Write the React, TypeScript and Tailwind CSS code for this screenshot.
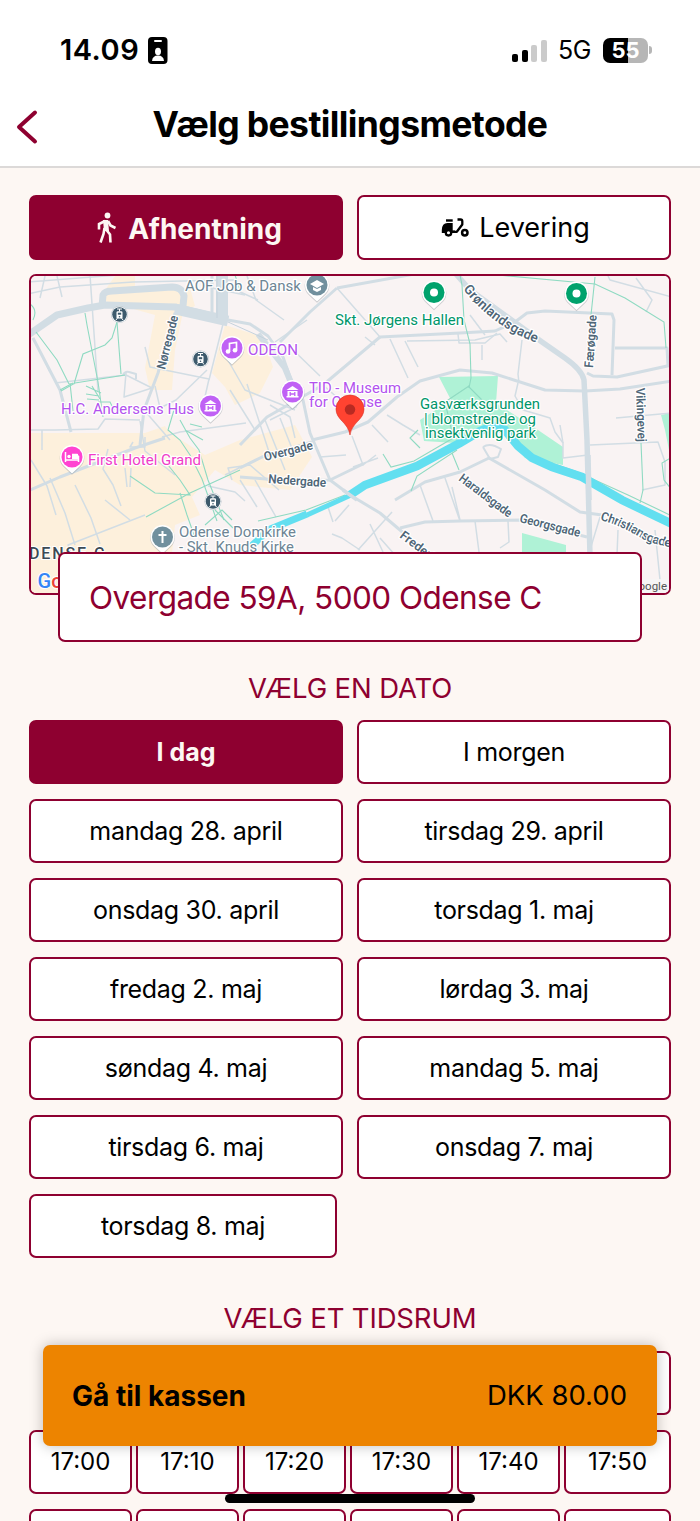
import React from "react";

const roadsWide: string[] = [
  "M28 335 L57 315 L88 308 L105 305 L175 307 L228 320",
  "M102 307 L103 295 Q105 291 112 291 L172 287 Q182 287 184 296 L183 306",
  "M222 274 L222 320",
];
const roadsMid: string[] = [
  "M228 320 L250 324 L268 336 L283 357 L291 380 L303 400 L310 433 L330 480 L350 495 L380 513 L400 530 L430 556",
  "M175 313 L158 373 L144 410 L140 445",
  "M33 338 L60 390 L71 432",
  "M337 288 L310 312 L280 342",
  "M337 288 L420 273",
  "M212 276 L212 312",
  "M380 337 L460 333 L495 331 L515 322 L527 313 L545 311 L612 314 L614 320 L612 375",
  "M380 337 L323 385 L267 417 L240 445",
  "M312 440 L345 432 L368 422 L397 397 L420 381 L460 370 L492 373 L545 390 L585 391 L620 389 L672 381",
  "M587 373 L593 376 L617 377 L672 365",
  "M615 348 L667 348 L668 366",
  "M28 491 L60 477 L135 448 L165 438",
  "M240 468 L262 457 L312 442 M240 477 L290 481 L330 480 L363 464",
  "M395 500 L425 482 L460 472 L489 458 L545 490 L580 512 L602 515",
  "M400 528 L425 522 L460 521 L520 520 L587 537",
];
const roadsThin: string[] = [
  "M302 395 L296 407 L270 420 M323 385 L340 400",
  "M380 337 L337 288 M365 337 L375 345 M275 342 L307 320 M290 347 L320 376",
  "M390 339 L408 378 M405 341 L418 367 M407 341 L475 340 L500 334 L507 342",
  "M458 334 L459 343 L485 343 L497 333 M470 315 L485 335",
  "M518 383 L515 396 L523 410 L540 415 L550 418 L555 432 L563 443 L563 458 L588 455",
  "M608 276 L610 280 L672 297 M636 278 L652 300 L646 312 M616 418 L672 413",
  "M590 445 L658 442 L665 462 L665 485 L642 490",
  "M352 436 L363 465 L376 455 M353 467 L378 458 M320 457 L346 455",
  "M372 425 L388 442 M387 415 L403 425 L420 435 M420 485 L433 521 M445 478 L460 521 M452 487 L460 520",
  "M327 504 L333 522 M349 505 L335 521 M332 534 L342 538 L360 550 M358 550 L392 512 M370 524 L383 552 M380 538 L395 555",
  "M45 276 L40 298 M28 294 L60 287 L133 282 L235 280 M28 282 L118 275 M57 276 L62 297",
  "M33 338 L50 372 M28 430 L55 430 L98 429 L105 419 L140 420",
  "M55 383 L126 375 L152 388 L124 397 L126 373 M145 347 L150 367 L209 379 L202 410",
  "M144 410 L170 440 M155 386 L160 408 L176 400 L207 370",
  "M90 275 L98 391 M209 380 L224 320 M225 355 L245 390 L295 410",
  "M42 430 L42 450 M133 442 L130 447 L145 447 L145 437",
  "M125 468 L127 487 M131 468 L130 487 M105 500 L130 520 M75 485 L91 518 L100 544",
  "M108 449 L103 469 L113 485 L121 506 M145 515 L68 545 L80 578",
  "M50 478 L65 513 L75 545 M31 460 L47 486 L56 515",
  "M140 421 L145 451 L175 475 M162 437 L180 432 L246 423",
  "M225 475 L251 462 M232 480 L228 468 L250 465 L279 490",
  "M208 486 L235 492 L245 501 M240 480 L257 507 M255 480 L276 517",
  "M247 276 L256 300 L284 320 M212 288 L245 295 M236 290 L258 300",
  "M519 383 L518 374 L522 340 M482 345 L482 360 M600 517 L590 550 M655 530 L660 580 M618 530 L617 555",
  "M475 521 L479 552 M508 521 L509 542 L500 548 M560 425 L563 443",
  "M270 405 L290 417 L295 438 M265 420 L285 470 M280 418 L295 456 M247 384 L270 455 M230 390 L255 430",
];
const paths: string[] = [
  "M85 313 L87 325 L98 382 L103 417 M117 322 L121 374",
  "M117 322 L112 338 L105 345 L83 354 L74 384 M61 391 L75 383 L125 375 M70 383 L73 411",
  "M36 332 L57 360 L69 384 M30 304 Q38 310 33 320",
  "M86 386 L101 393 M86 394 L99 396 M87 399 L99 400 M92 386 L100 399",
  "M98 402 L110 402 L114 410 M174 410 L168 430 L180 440 L190 455 L202 479 L217 521",
  "M180 420 L190 438 L199 450 L208 480 L224 520 M202 427 L190 424 M203 440 L185 430",
  "M146 517 L190 493 L240 470 M130 476 L155 493 L190 495 L180 480 L168 465 M180 493 L187 515 L194 535",
  "M205 525 L222 510 L232 520 M215 510 L233 528",
  "M460 275 L462 285 L464 320 L470 344 L471 378 L469 388 M498 275 L595 284 L625 298 L664 322 L666 348",
  "M595 277 L591 315 M641 443 L643 490 L640 503 M672 457 L662 463 L664 480 L672 490",
  "M258 521 L306 510 L345 495 M383 454 L391 467 L414 461 L455 437 M411 491 L417 476 L457 450",
  "M517 446 L540 459 L575 471 L628 495 L672 516",
  "M418 430 L410 438 L420 448 M452 453 L459 470 M235 275 L240 290",
  "M60 390 L73 383 M468 386 L485 403 M469 386 L445 402 L453 436",
];

function Pin({ x, y, color, children }: { x: number; y: number; color: string; children?: React.ReactNode }) {
  return (
    <g transform={`translate(${x} ${y})`}>
      <path d="M0 17 L-8 9.500 A12.300 12.300 0 1 1 8 9.500 Z" fill="#77838c" opacity=".35" transform="translate(0 .8)" />
      <path d="M0 16.500 L-8 9 A12 12 0 1 1 8 9 Z" fill="#fff" />
      <circle r="10.500" fill={color} />
      {children}
    </g>
  );
}

function Station({ x, y }: { x: number; y: number }) {
  return (
    <g transform={`translate(${x} ${y})`}>
      <circle r="8.500" fill="#b9c4cb" />
      <circle r="8" fill="#fff" />
      <circle r="7.300" fill="#3d5a6c" />
      <path d="M-2.500 -5.500 H2.500 M0 -5.500 V-3 M-3.500 5.500 L-2 3.500 M3.500 5.500 L2 3.500" stroke="#fff" strokeWidth="1" fill="none" />
      <rect x="-3" y="-3.300" width="6" height="7.300" rx="1.300" fill="#fff" />
      <rect x="-1.700" y="-1.800" width="3.400" height="2" fill="#3d5a6c" />
      <circle cy="2.200" r=".8" fill="#3d5a6c" />
    </g>
  );
}

function MuseumGlyph() {
  return (
    <g>
      <path d="M-6 -2 L0 -6 L6 -2 Z M-5 -1 H5 V5 H-5 Z M-6 4 H6 V5.500 H-6 Z" fill="#fff" />
      <path d="M-2.300 4 V0 M2.300 4 V0 M-2.300 2 H2.300" stroke="#c061f5" strokeWidth="1.300" fill="none" />
    </g>
  );
}

function Label({ x, y, w, color, children, t, size = 14.5, bold = false }: {
  x: number; y: number; w?: number; color: string; children: React.ReactNode; t?: string; size?: number; bold?: boolean;
}) {
  return (
    <text x={x} y={y} textLength={w} lengthAdjust="spacingAndGlyphs" transform={t} fontSize={size} fill={color}
      fontWeight={bold ? 600 : 450} stroke="#fff" strokeWidth="2.500" strokeLinejoin="round" paintOrder="stroke">
      {children}
    </text>
  );
}

function CityMap() {
  const street = "#4f6677";
  const green = "#00966a";
  const purple = "#b352ee";
  return (
    <svg viewBox="31 276 638 317" className="block h-full w-full" fontFamily="Roboto, sans-serif" preserveAspectRatio="none">
      <rect x="30" y="275" width="642" height="320" fill="#f9f3f3" />
      <g fill="#fdf0dc">
        <path d="M30 433 H170 L205 455 L240 440 L295 425 L312 457 L290 490 L240 485 L215 470 L192 497 L200 515 L175 525 L172 553 V595 H30 Z" />
        <path d="M115 276 H135 V288 H190 L195 306 L183 312 L175 350 L172 390 L150 390 L145 368 L155 315 L105 301 V290 Z" />
        <path d="M225 325 L263 337 L273 367 L260 393 L235 405 L225 387 L212 373 Z" />
        <path d="M145 433 L165 426 L175 440 Z" />
      </g>
      <g fill="#aff2d6">
        <path d="M439 377 L498 376 L496 403 L538 430 L563 447 V465 L525 458 L512 440 L500 430 L480 433 L455 443 L424 441 L420 420 L451 400 Z" />
        <path d="M522 533 L566 545 V556 H522 Z" />
        <path d="M661 415 L670 413 V455 L665 430 Z" />
      </g>
      <g fill="none" stroke="#d2dde4" strokeLinejoin="round">
        {roadsThin.map((d, i) => <path key={i} d={d} strokeWidth="1.500" />)}
        {roadsMid.map((d, i) => <path key={i} d={d} strokeWidth="3" />)}
        {roadsWide.map((d, i) => <path key={i} d={d} strokeWidth="7" />)}
        <path d="M175 309 L228 321" strokeWidth="11" />
        <path d="M222 276 V320" strokeWidth="12" />
        <path d="M217 276 V318" stroke="#c5d2dc" strokeWidth="1" />
        <path d="M456 274 L470 290 L542 342 L565 358 Q582 370 584 380 L587 440 L590 556" strokeWidth="5.500" />
        <path d="M258 334 L285 368 L292 385" strokeWidth="6" />
        <path d="M228 322 L268 340" stroke="#c5d2dc" strokeWidth="1" />
        <path d="M483 447 L490 459 L498 457 L501 449 Q490 442 483 447" strokeWidth="2" />
        <path d="M123 375 Q125 371 129 372 L136 374 L136 379" strokeWidth="2" />
      </g>
      <g fill="none" stroke="#8fdac2" strokeWidth="1.100">
        {paths.map((d, i) => <path key={i} d={d} />)}
      </g>
      <path d="M248 549 L256 542 L268 530 L307 514" fill="none" stroke="#62dff0" strokeWidth="7" />
      <path d="M307 515 L351 495" fill="none" stroke="#62dff0" strokeWidth="5" />
      <path d="M350 495 L365 485 L417 466 L460 443 L480 431 L493 426 L505 430 L518 446 L532 458 L552 467 L582 477 L622 500 L672 524" fill="none" stroke="#62dff0" strokeWidth="8.500" />
      <path d="M343 490 L357 500 M588 465 L589 500" stroke="#d2dde4" strokeWidth="3.500" fill="none" />
      <path d="M588 455 L589 500" stroke="#d2dde4" strokeWidth="5.500" fill="none" />

      <Label x={185} y={291} w={116} color="#6d8594">AOF Job &amp; Dansk</Label>
      <Label x={335} y={325} w={129} color={green}>Skt. Jørgens Hallen</Label>
      <Label x={248} y={355} w={50} color={purple}>ODEON</Label>
      <Label x={61} y={413.5} w={133} color={purple}>H.C. Andersens Hus</Label>
      <Label x={309} y={392.500} w={92} color={purple}>TID - Museum</Label>
      <Label x={309} y={407} w={73} color={purple}>for Odense</Label>
      <Label x={88} y={464.500} w={113} color="#f03cc8">First Hotel Grand</Label>
      <Label x={179} y={537} w={117} color="#6d8594">Odense Domkirke</Label>
      <Label x={179} y={552} w={115} color="#6d8594">- Skt. Knuds Kirke</Label>
      <Label x={420} y={408.500} w={120} color={green}>Gasværksgrunden</Label>
      <Label x={424} y={423.500} w={112} color={green}>| blomstrende og</Label>
      <Label x={425} y={438} w={111} color={green}>insektvenlig park</Label>
      <Label x={0} y={0} w={55} size={12.500} bold color={street} t="translate(165 370) rotate(-76)">Nørregade</Label>
      <Label x={0} y={0} w={50} size={12.500} bold color={street} t="translate(265 461) rotate(-14)">Overgade</Label>
      <Label x={0} y={0} w={58} size={12.500} bold color={street} t="translate(268 483) rotate(4)">Nedergade</Label>
      <Label x={0} y={0} w={53} size={12.500} bold color={street} t="translate(593 368) rotate(-86)">Færøgade</Label>
      <Label x={0} y={0} w={54} size={12.500} bold color={street} t="translate(636 388) rotate(88)">Vikingevej</Label>
      <Label x={0} y={0} w={62} size={12.500} bold color={street} t="translate(519 522) rotate(14)">Georgsgade</Label>
      <Label x={0} y={0} w={63} size={12.500} bold color={street} t="translate(458 480) rotate(37)">Haraldsgade</Label>
      <Label x={0} y={0} size={12.500} bold color={street} t="translate(399 537) rotate(37)">Frederiksgade</Label>
      <path id="gronlandsgade" d="M463 289 Q494 329 545 346" fill="none" />
      <path id="christiansgade" d="M600 520 Q620 525 643 539 Q655 546 690 550" fill="none" />
      <g fontSize="13.500" fontWeight="600" fill={street} stroke="#fff" strokeWidth="2.500" paintOrder="stroke">
        <text><textPath href="#gronlandsgade">Grønlandsgade</textPath></text>
        <text fontSize="12.500" letterSpacing="-0.650"><textPath href="#christiansgade">Christiansgade</textPath></text>
      </g>
      <text x="29" y="559" fontSize="16" fontWeight="500" letterSpacing="1.900" fill="#3c4a55" stroke="#fff" strokeWidth="2" paintOrder="stroke">DENSE C</text>

      <Station x={119.500} y={314.500} />
      <Station x={200.500} y={359} />
      <Station x={213} y={501.500} />
      <Pin x={317} y={285} color="#71909e">
        <path d="M-7 -1 L0 -5 L7 -1 L0 3 Z M-4 2 V5 L0 7 L4 5 V2 L0 4 Z" fill="#fff" />
      </Pin>
      <Pin x={434} y={292.500} color="#00a26c"><circle r="4" fill="#fff" /></Pin>
      <Pin x={576.500} y={293.500} color="#00a26c"><circle r="4" fill="#fff" /></Pin>
      <Pin x={232} y={348} color="#c061f5">
        <path d="M-2.500 3.500 V-4.500 L4.500 -5.500 V2" fill="none" stroke="#fff" strokeWidth="1.700" />
        <circle cx="-4" cy="3.500" r="2.300" fill="#fff" /><circle cx="3" cy="2.300" r="2.300" fill="#fff" />
      </Pin>
      <Pin x={210.500} y={406} color="#c061f5"><MuseumGlyph /></Pin>
      <Pin x={292.500} y={392} color="#c061f5"><MuseumGlyph /></Pin>
      <Pin x={72} y={457} color="#ff43d1">
        <path d="M-6.500 -5 V5 M-6.500 3 H6.500 M6.500 5 V-1 M0 -2.500 H5 L6.500 0" fill="none" stroke="#fff" strokeWidth="1.500" />
        <path d="M0 -3 H6 V2 H0 Z" fill="#fff" /><circle cx="-3" cy="-.5" r="1.700" fill="#fff" />
      </Pin>
      <Pin x={162.500} y={537} color="#71909e">
        <path d="M0 -6 V6 M-4 -2 H4" stroke="#fff" strokeWidth="2" fill="none" />
      </Pin>
      <path d="M350 435 C348 422 336 420 336 409 A14 14 0 0 1 364 409 C364 420 352 422 350 435 Z" fill="#ff4331" stroke="#d93025" strokeWidth=".6" />
      <circle cx="350" cy="409.500" r="5.200" fill="#b82a22" />

      <text x="37.500" y="587.500" fontSize="20" fontWeight="500" stroke="#fff" strokeWidth="2" paintOrder="stroke">
        <tspan fill="#3585f5">G</tspan><tspan fill="#ea4335">o</tspan>
      </text>
      <rect x="560" y="579" width="110" height="15" fill="#f7f5f4" opacity=".85" />
      <text x="667" y="590" fontSize="11.500" textAnchor="end" fill="#555">Google</text>
    </svg>
  );
}

const dates: string[] = [
  "I dag", "I morgen", "mandag 28. april", "tirsdag 29. april", "onsdag 30. april", "torsdag 1. maj",
  "fredag 2. maj", "lørdag 3. maj", "søndag 4. maj", "mandag 5. maj", "tirsdag 6. maj", "onsdag 7. maj",
];

const times: string[] = ["17:00", "17:10", "17:20", "17:30", "17:40", "17:50"];

const outline = "flex items-center justify-center rounded-[7px] border-2 border-[#8e0030]";

function WalkIcon() {
  return (
    <svg width="22" height="32" viewBox="0 0 22 32" fill="none" stroke="#fdf7f3" strokeLinecap="butt">
      <circle cx="12.500" cy="3.500" r="2.900" fill="#fdf7f3" stroke="none" />
      <path d="M8 8 L13 8 L14 19 L9 19 Z" fill="#fdf7f3" stroke="none" />
      <path d="M10 9 L4 12 V17.500 M13 9 L15.500 13.500 L20.500 16 M9.500 16 L8.500 22 L5.500 30.500 M11.500 18 L15 22.500 L15.500 30.500" strokeWidth="2.600" />
    </svg>
  );
}

function ScooterIcon() {
  return (
    <svg width="28" height="19" viewBox="0 0 28 19" fill="none" stroke="#000">
      <rect x="5" y="1.300" width="6.700" height="2.400" fill="#000" stroke="none" />
      <path d="M.8 15 V12 Q1 5 6.500 5 H11.700 V12.600 H14 V15 Z" fill="#000" stroke="none" />
      <path d="M16.500 1.500 H19.500 Q21.300 1.500 21.300 3.300 V6.500 L15.800 13.800 H11" strokeWidth="2.300" strokeLinejoin="round" />
      <circle cx="7.500" cy="14.800" r="2.700" strokeWidth="2.300" fill="#fff" />
      <circle cx="23.800" cy="14.800" r="2.700" strokeWidth="2.500" />
    </svg>
  );
}

export default function App() {
  return (
    <div className="relative flex h-[1521px] w-[700px] flex-col overflow-hidden bg-[#fdf7f3] font-['Inter',sans-serif] text-black">
      <header className="flex h-[168px] shrink-0 flex-col border-b-2 border-[#dcd9d8] bg-white">
        <div className="flex h-[100px] items-center pl-[60px] pr-[48px]">
          <span className="w-[79px] whitespace-nowrap text-[29px] font-semibold tracking-[0.5px]">14.09</span>
          <svg className="ml-[9px]" width="20" height="27" viewBox="0 0 20 27">
            <rect width="19.500" height="27" rx="4" fill="#000" />
            <rect x="6" y="3" width="8" height="2" rx="1" fill="#fff" />
            <ellipse cx="10" cy="14.500" rx="3" ry="3.800" fill="#fff" />
            <path d="M4 24 Q4.500 18.500 10 18.500 Q15.500 18.500 16 24 Z" fill="#fff" />
          </svg>
          <div className="ml-auto flex h-[23px] items-end gap-[3.700px]">
            <i className="h-[8px] w-[6px] rounded-[2px] bg-black" />
            <i className="h-[12px] w-[6px] rounded-[2px] bg-black" />
            <i className="h-[17px] w-[6px] rounded-[2px] bg-[#cbcbcb]" />
            <i className="h-[22px] w-[6px] rounded-[2px] bg-[#cbcbcb]" />
          </div>
          <span className="ml-[11px] pt-[1px] text-[25px] tracking-[-0.4px]">5G</span>
          <div className="ml-[12px] flex h-[25px] w-[45px] items-center justify-center rounded-[7px] bg-[linear-gradient(90deg,#000_55%,#b6b6b6_55%)] text-[22px] font-bold text-white">55</div>
          <i className="ml-[1px] h-[8px] w-[3px] rounded-r-[3px] bg-[#b6b6b6]" />
        </div>
        <div className="flex h-[52px] items-center">
          <svg className="ml-[15px] mt-[2px]" width="24" height="36" viewBox="0 0 24 36" fill="none">
            <path d="M20 3.500 L4 18 L20 32.500" stroke="#8e0030" strokeWidth="4" strokeLinecap="round" strokeLinejoin="round" />
          </svg>
          <h1 className="mt-[-2px] w-[622px] text-center text-[35.500px] font-bold tracking-[-0.6px]">Vælg bestillingsmetode</h1>
        </div>
      </header>

      <main className="flex flex-col px-[29px] pt-[27px]">
        <div className="grid h-[65px] grid-cols-2 gap-[14px]">
          <button className={`${outline} gap-[11px] bg-[#8e0030] pl-[5px] text-[28px] font-bold text-[#fdf7f3]`}>
            <WalkIcon /><span className="pt-[2px]">Afhentning</span>
          </button>
          <button className={`${outline} gap-[10px] bg-white pl-[3px] text-[27px]`}>
            <ScooterIcon /><span className="pt-[2px]">Levering</span>
          </button>
        </div>

        <section className="mt-[14px] h-[321px] overflow-hidden rounded-[7px] border-2 border-[#8e0030]">
          <CityMap />
        </section>
        <div className="relative mx-[29px] mt-[-43px] flex h-[90px] items-center rounded-[7px] border-2 border-[#8e0030] bg-white pl-[29px] pt-[2px] text-[31.500px] tracking-[-0.55px] text-[#8e0030]">
          <span>Overgade 59A, 5000 Odense C</span>
        </div>

        <h2 className="mt-[26px] h-[40px] text-center text-[27.500px] leading-[40px] tracking-[-0.150px] text-[#8e0030]">VÆLG EN DATO</h2>
        <div className="mt-[12px] grid grid-cols-2 gap-x-[14px] gap-y-[15px] text-[25px]">
          {dates.map((d, i) => (
            <button key={d} className={`${outline} h-[64px] pt-[1px] ${i === 0 ? "bg-[#8e0030] font-bold text-[#fdf7f3]" : "bg-white tracking-[-0.3px]"}`}>
              <span>{d}</span>
            </button>
          ))}
          <button className={`${outline} h-[64px] w-[308px] bg-white pt-[1px] tracking-[-0.3px]`}><span>torsdag 8. maj</span></button>
        </div>

        <h2 className="mt-[40px] h-[40px] text-center text-[27.500px] leading-[40px] tracking-[-0.150px] text-[#8e0030]">VÆLG ET TIDSRUM</h2>
        <div className="mt-[13px] grid grid-cols-[103px_103px_103px_103px_103px_107px] gap-x-[4px] gap-y-[15px] text-[24px]">
          <div className={`${outline} col-start-6 h-[64px] bg-white`} />
          {times.map((t) => (
            <button key={t} className={`${outline} h-[64px] bg-white`}><span>{t}</span></button>
          ))}
          {times.map((t) => (
            <div key={t} className={`${outline} h-[64px] bg-white`} />
          ))}
        </div>
      </main>

      <button className="absolute left-[43px] top-[1345px] flex h-[101px] w-[614px] items-center justify-between rounded-[7px] bg-[#ed8400] pl-[29px] pr-[30px] pt-[1px] text-[27.500px] shadow-[0_0_14px_rgba(0,0,0,0.25)]">
        <span className="text-[28px] font-bold">Gå til kassen</span>
        <span>DKK 80.00</span>
      </button>
      <div className="absolute left-[225px] top-[1494px] h-[9px] w-[250px] rounded-full bg-black" />
    </div>
  );
}
